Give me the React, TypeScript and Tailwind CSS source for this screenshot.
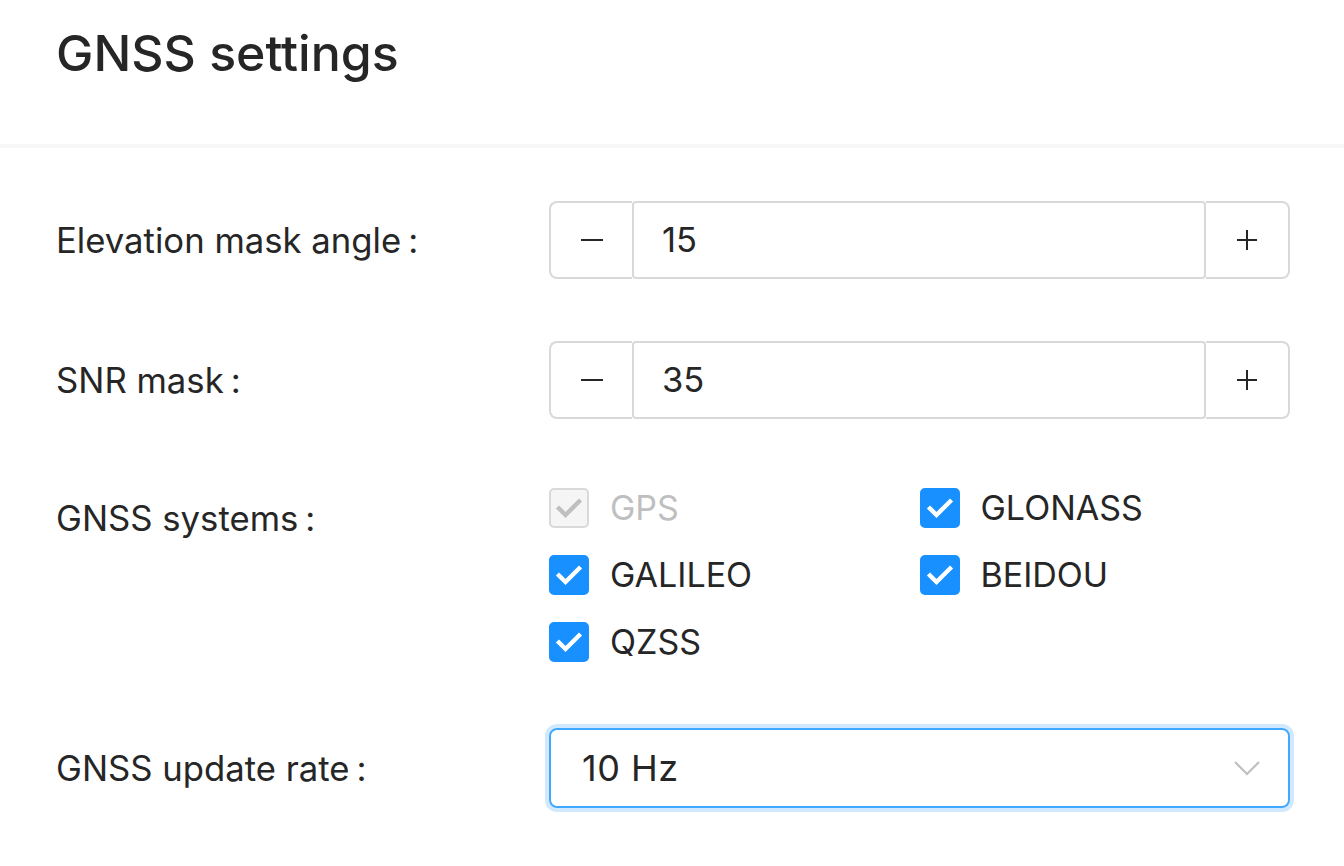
import React from "react";

const font = { fontFamily: "Inter, 'Noto Sans', sans-serif" };

function Check({ disabled }: { disabled?: boolean }) {
  return (
    <span
      className={
        "flex h-[40px] w-[40px] shrink-0 items-center justify-center rounded-[5px] border-2 " +
        (disabled ? "border-[#d9d9d9] bg-[#f5f5f5]" : "border-[#1890ff] bg-[#1890ff]")
      }
    >
      <svg width="40" height="40" viewBox="0 0 40 40" fill="none" className="-m-[2px]">
        <path
          d="M10 20.5 L16.5 27 L30 13.5"
          stroke={disabled ? "#bfbfbf" : "#ffffff"}
          strokeWidth="4.4"
          strokeLinecap="square"
          strokeLinejoin="miter"
        />
      </svg>
    </span>
  );
}

function CheckItem({ label, disabled }: { label: string; disabled?: boolean }) {
  return (
    <div className="flex h-[67px] items-center gap-[21px]">
      <Check disabled={disabled} />
      <span className={"text-[34px] " + (disabled ? "text-[#bfbfbf]" : "text-[#262626]")}>{label}</span>
    </div>
  );
}

function Label({ children, className = "" }: { children: React.ReactNode; className?: string }) {
  return (
    <div className={"flex w-[493px] items-center text-[34.7px] text-[#262626] " + className}>
      <span>{children}</span>
      <span className="ml-[7px]">:</span>
    </div>
  );
}

function NumberInput({ value }: { value: string }) {
  return (
    <div className="flex h-[78px] w-[741px] items-stretch">
      <div className="flex w-[83px] items-center justify-center rounded-l-[8px] border-2 border-r-0 border-[#d9d9d9]">
        <svg width="22" height="4" viewBox="0 0 22 4">
          <rect x="0" y="1" width="22" height="2" fill="#262626" />
        </svg>
      </div>
      <div className="flex flex-1 items-center rounded-[4px] border-2 border-[#d9d9d9] pl-[28px] text-[34.5px] text-[#262626]">
        {value}
      </div>
      <div className="flex w-[84px] items-center justify-center rounded-r-[8px] border-2 border-l-0 border-[#d9d9d9]">
        <svg width="20" height="20" viewBox="0 0 20 20">
          <rect x="0" y="9" width="20" height="2" fill="#262626" />
          <rect x="9" y="0" width="2" height="20" fill="#262626" />
        </svg>
      </div>
    </div>
  );
}

export default function App() {
  return (
    <div className="h-[866px] w-[1344px] bg-white" style={font}>
      <div className="flex h-[144px] items-start pl-[56px] pt-[21px]">
        <h1 className="text-[50px] font-medium leading-[64px] text-[#262626]">GNSS settings</h1>
      </div>
      <div className="h-[4px] bg-[#f7f7f7]" />
      <div className="flex flex-col pl-[56px] pt-[53px]">
        <div className="flex items-center">
          <Label>Elevation mask angle</Label>
          <NumberInput value="15" />
        </div>
        <div className="mt-[62px] flex items-center">
          <Label>SNR mask</Label>
          <NumberInput value="35" />
        </div>
        <div className="mt-[55px] flex items-start">
          <Label className="h-[67px] pt-[22px]">GNSS systems</Label>
          <div className="grid w-[741px] grid-cols-2">
            <CheckItem label="GPS" disabled />
            <CheckItem label="GLONASS" />
            <CheckItem label="GALILEO" />
            <CheckItem label="BEIDOU" />
            <CheckItem label="QZSS" />
          </div>
        </div>
        <div className="mt-[53px] flex items-center">
          <Label>GNSS update rate</Label>
          <div className="flex h-[80px] w-[741px] items-center justify-between rounded-[8px] border-2 border-[#40a9ff] pl-[31px] pr-[28px] shadow-[0_0_0_4px_rgba(24,144,255,0.2)]">
            <span className="text-[36px] tracking-[0.5px] text-[#262626]">10 Hz</span>
            <svg width="26" height="16" viewBox="0 0 26 16" fill="none">
              <path d="M1 2 L13 14 L25 2" stroke="#bfbfbf" strokeWidth="2.2" />
            </svg>
          </div>
        </div>
      </div>
    </div>
  );
}
